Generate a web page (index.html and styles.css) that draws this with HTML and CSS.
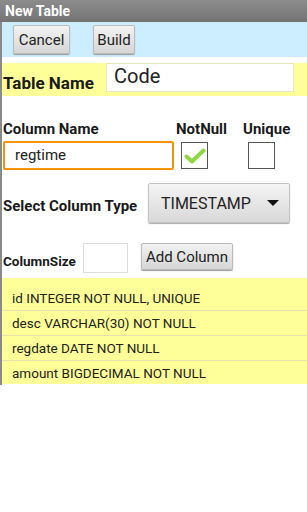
FILE: index.html
```html
<!DOCTYPE html>
<html lang="en">
<head>
    <meta charset="UTF-8">
    <title>New Table</title>
    <link rel="stylesheet" href="styles.css">
</head>
<body>
    <div class="titlebar">New Table</div>
    <div class="page">
        <div class="toolbar">
            <button class="btn btn-cancel">Cancel</button>
            <button class="btn btn-build">Build</button>
        </div>

        <div class="table-name">
            <span class="label big">Table Name</span>
            <div class="field name-field">Code</div>
        </div>

        <div class="col-head">
            <span class="label colname-label">Column Name</span>
            <span class="label notnull-label">NotNull</span>
            <span class="label">Unique</span>
        </div>
        <div class="col-row">
            <div class="field col-field">regtime</div>
            <div class="check checked">
                <svg width="22" height="18" viewBox="0 0 22 18">
                    <path d="M2.5 9.5 L8 14.5 L19.5 3.5" fill="none" stroke="#8ed643" stroke-width="4" stroke-linecap="round" stroke-linejoin="round"/>
                </svg>
            </div>
            <div class="check unique-check"></div>
        </div>

        <div class="type-row">
            <span class="label type-label">Select Column Type</span>
            <div class="spinner">
                <span>TIMESTAMP</span>
                <span class="arrow"></span>
            </div>
        </div>

        <div class="size-row">
            <span class="label small">ColumnSize</span>
            <div class="size-box"></div>
            <button class="btn btn-add">Add Column</button>
        </div>

        <ul class="columns">
            <li>id INTEGER NOT NULL, UNIQUE</li>
            <li>desc VARCHAR(30) NOT NULL</li>
            <li>regdate DATE NOT NULL</li>
            <li>amount BIGDECIMAL NOT NULL</li>
        </ul>
    </div>
</body>
</html>
```

FILE: styles.css
```css
body {
    margin: 0;
    font-family: Roboto, 'Liberation Sans', sans-serif;
    background-color: white;
    color: #222;
}

.titlebar {
    height: 22px;
    line-height: 22px;
    padding-left: 5px;
    background: linear-gradient(#8c8c8c, #747474);
    color: white;
    font-weight: bold;
    font-size: 14px;
}

.page {
    border-left: 2px solid #8a8a8a;
    width: 305px;
    height: 363px;
}

.toolbar {
    background-color: #cdeeff;
    height: 35px;
    display: flex;
    align-items: center;
    padding-left: 11px;
}

.btn {
    font-family: Roboto, 'Liberation Sans', sans-serif;
    font-size: 15px;
    color: #222;
    background: linear-gradient(#f2f2f2, #d6d6d6);
    border: 1px solid #bbb;
    border-radius: 2px;
    box-shadow: 0 1px 1px #999;
    padding: 0;
}

.btn-cancel {
    width: 57px;
    height: 29px;
}

.btn-build {
    width: 42px;
    height: 29px;
    margin-left: 23px;
}

.table-name {
    margin-top: 6px;
    background-color: #ffff99;
    height: 33px;
    display: flex;
    align-items: flex-start;
}

.label {
    font-weight: bold;
    font-size: 15px;
    color: #1a1a1a;
}

.big {
    font-size: 17px;
    width: 103px;
    padding-left: 1px;
    margin-top: 10px;
}

.small {
    font-size: 13.5px;
    width: 80px;
}

.field {
    background: white;
}

.name-field {
    width: 179px;
    height: 27px;
    border: 1px solid #e6e6c0;
    padding-left: 7px;
    line-height: 25px;
    font-size: 20px;
}

.col-head {
    display: flex;
    margin-top: 25px;
    padding-left: 1px;
    height: 16px;
    line-height: 16px;
}

.colname-label {
    width: 173px;
}

.notnull-label {
    width: 67px;
}

.col-row {
    display: flex;
    align-items: center;
    margin-top: 4px;
    padding-left: 1px;
}

.col-field {
    width: 157px;
    height: 25px;
    border: 2px solid #f7930b;
    border-radius: 2px;
    padding-left: 10px;
    line-height: 25px;
    font-size: 15px;
}

.check {
    width: 25px;
    height: 25px;
    border: 1px solid #555;
    background: white;
    display: flex;
    align-items: center;
    justify-content: center;
}

.checked {
    margin-left: 7px;
}

.unique-check {
    margin-left: 40px;
}

.type-row {
    display: flex;
    align-items: center;
    margin-top: 13px;
    padding-left: 1px;
}

.type-label {
    width: 145px;
    margin-top: 6px;
}

.spinner {
    width: 128px;
    height: 38px;
    padding-left: 12px;
    display: flex;
    align-items: center;
    justify-content: space-between;
    background: linear-gradient(#f4f4f4, #d8d8d8);
    border: 1px solid #c4c4c4;
    border-radius: 2px;
    box-shadow: 0 1px 1px #aaa;
    font-size: 16px;
    color: #222;
}

.arrow {
    width: 0;
    height: 0;
    border-left: 6px solid transparent;
    border-right: 6px solid transparent;
    border-top: 6px solid #111;
    margin-right: 10px;
}

.size-row {
    display: flex;
    align-items: center;
    margin-top: 20px;
    padding-left: 1px;
}

.size-row .label {
    margin-top: 6px;
}

.size-box {
    width: 43px;
    height: 28px;
    border: 1px solid #ddd;
    background: white;
}

.btn-add {
    margin-left: 13px;
    width: 92px;
    height: 27px;
    font-size: 15px;
    margin-top: -3px;
}

.columns {
    list-style: none;
    margin: 5px 0 0 0;
    padding: 8px 0 0 0;
    height: 98px;
    background-color: #ffff99;
}

.columns li {
    font-size: 13.5px;
    height: 24px;
    line-height: 24px;
    padding-left: 10px;
    border-bottom: 1px solid #e8e0b0;
    color: #222;
}

.columns li:last-child {
    border-bottom: none;
}
```
